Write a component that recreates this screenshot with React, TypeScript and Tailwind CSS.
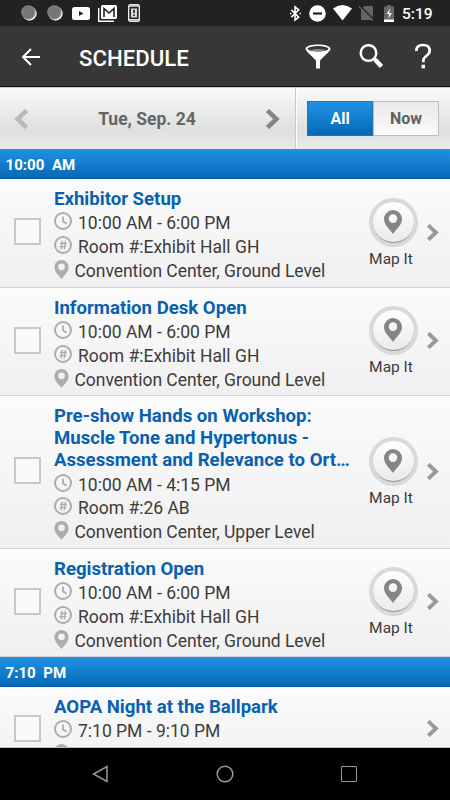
import React from 'react';

type Session = { title: string[]; time: string; room?: string; place?: string; height: string };

const morning: Session[] = [
  { title: ['Exhibitor Setup'], time: '10:00 AM - 6:00 PM', room: 'Room #:Exhibit Hall GH', place: 'Convention Center, Ground Level', height: 'h-[109px]' },
  { title: ['Information Desk Open'], time: '10:00 AM - 6:00 PM', room: 'Room #:Exhibit Hall GH', place: 'Convention Center, Ground Level', height: 'h-[108px]' },
  {
    title: ['Pre-show Hands on Workshop:', 'Muscle Tone and Hypertonus -', 'Assessment and Relevance to Ort…'],
    time: '10:00 AM - 4:15 PM', room: 'Room #:26 AB', place: 'Convention Center, Upper Level', height: 'h-[153px]',
  },
  { title: ['Registration Open'], time: '10:00 AM - 6:00 PM', room: 'Room #:Exhibit Hall GH', place: 'Convention Center, Ground Level', height: 'h-[108px]' },
];

function Pin({ className }: { className: string }) {
  return (
    <svg className={className} viewBox="0 0 18 24" fill="currentColor">
      <path fillRule="evenodd" d="M9 0a9 9 0 0 0-9 9c0 6 6 10.500 9 15 3-4.500 9-9 9-15a9 9 0 0 0-9-9Zm0 4.300a4.300 4.300 0 1 1 0 8.600 4.300 4.300 0 0 1 0-8.600Z" />
    </svg>
  );
}

function Clock() {
  return (
    <svg className="size-[18px] shrink-0" viewBox="0 0 18 18" fill="none" stroke="#adadad" strokeWidth="2">
      <circle cx="9" cy="9" r="8" />
      <path d="M9 4.500V9.500L12.700 11.600" strokeWidth="1.800" />
    </svg>
  );
}

function Hash() {
  return (
    <svg className="size-[18px] shrink-0" viewBox="0 0 18 18" fill="none" stroke="#adadad" strokeWidth="2">
      <circle cx="9" cy="9" r="8" />
      <path d="M8.300 4.700 7 13.300M11.500 4.700 10.200 13.300M6 7.500h6.800M5.500 10.700h6.800" strokeWidth="1.300" />
    </svg>
  );
}

function Chevron({ className, left }: { className: string; left?: boolean }) {
  return (
    <svg className={className} viewBox="0 0 14 20" fill="none" stroke="currentColor" strokeWidth="4.500">
      <path d={left ? 'M12.500 1.500 3.500 10l9 8.500' : 'M1.500 1.500l9 8.500-9 8.500'} />
    </svg>
  );
}

function TimeHeader({ children }: { children: React.ReactNode }) {
  return (
    <div className="h-[30px] shrink-0 border-b border-[#0759a4] bg-linear-to-b from-[#2192e5] to-[#0469b5] pl-[5.500px] text-[15.100px] leading-[32px] font-bold whitespace-pre text-white">
      {children}
    </div>
  );
}

function Row({ s }: { s: Session }) {
  return (
    <div className={`flex shrink-0 border-b border-[#d3d4d6] bg-linear-to-b from-[#fbfbfb] to-[#f0f0f2] ${s.height}`}>
      <div className="flex w-[54px] shrink-0 items-center pb-[3px] pl-[14px]">
        <div className="size-[27px] border-2 border-[#c8c8c8] bg-[#fafafa]" />
      </div>
      <div className="w-[315px] shrink-0 pt-[9px] whitespace-nowrap text-[#3f3b38]">
        <div className="text-[18.600px] leading-[22.200px] font-bold text-[#0861b0]">
          {s.title.map((t) => <div key={t}>{t}</div>)}
        </div>
        <div className="mt-[2px] text-[17.500px] leading-[23.700px]">
          <div className="flex h-[23.700px] items-start gap-[6px]"><Clock /><span>{s.time}</span></div>
          {s.room && <div className="flex h-[23.700px] items-start gap-[6px]"><Hash /><span>{s.room}</span></div>}
          {s.place && <div className="flex h-[23.700px] items-start gap-[5.500px]"><Pin className="h-[19px] w-[15px] shrink-0 text-[#adadad]" /><span className="tracking-[-0.040px]">{s.place}</span></div>}
        </div>
      </div>
      <div className="flex w-[49px] shrink-0 flex-col items-center justify-center">
        <div className="flex size-[49px] items-center justify-center rounded-full bg-[#d9d9d9]">
          <div className="flex size-[41px] items-center justify-center rounded-full border-b border-[#999] bg-linear-to-b from-white to-[#eaeaea]">
            <Pin className="mr-px h-[24px] w-[18px] text-[#858585]" />
          </div>
        </div>
        <div className="mt-[2px] mr-[5px] h-[20px] text-[15.500px] leading-[20px] whitespace-nowrap text-[#3f3b38]">Map It</div>
      </div>
      <div className="flex flex-1 items-center pb-[2px] pl-[9px]">
        <Chevron className="h-[17px] w-[12px] text-[#999]" />
      </div>
    </div>
  );
}

function StatusBar() {
  return (
    <div className="flex h-[26px] shrink-0 items-center bg-[#222] pr-[17px] pl-[21px] text-white">
      {[0, 1].map((i) => (
        <svg key={i} className="mr-[10px] size-[16px]" viewBox="0 0 16 16">
          <circle cx="8.500" cy="8.500" r="7.200" fill="#eee" />
          <circle cx="7.300" cy="7.300" r="7.100" fill="#777" />
          <circle cx="7.300" cy="7.300" r="6.200" fill="none" stroke="#999" strokeDasharray="1 1.300" />
        </svg>
      ))}
      <svg className="-ml-px h-[13px] w-[18px]" viewBox="0 0 18 13"><rect width="18" height="13" rx="2.500" fill="#fff" /><path d="M7 4v5l4.500-2.500z" fill="#222" /></svg>
      <svg className="ml-[8px] h-[17px] w-[19px]" viewBox="0 0 19 17">
        <path d="M.7 3v13.200H16" fill="none" stroke="#fff" strokeWidth="1.400" />
        <rect x="3" width="16" height="14" rx="1.500" fill="#fff" />
        <path d="M6 12V3.500l5 4.500 5-4.500V12" fill="none" stroke="#222" strokeWidth="1.600" />
      </svg>
      <svg className="ml-[11px] h-[18px] w-[12px]" viewBox="0 0 12 18">
        <rect x=".7" y=".7" width="10.600" height="16.600" rx="1.500" fill="#222" stroke="#e8e8e8" strokeWidth="1.400" />
        <path d="M1 2h10M1 15.800h10" stroke="#ddd" strokeWidth="1.500" />
        <rect x="3" y="4.500" width="6" height="9" fill="#ddd" />
        <path d="M6 5.800v3.500M6 10.500v1.600" stroke="#222" strokeWidth="1.600" />
      </svg>
      <div className="flex-1" />
      <svg className="mr-px h-[17px] w-[11px]" viewBox="0 0 12 17" fill="none" stroke="#fff" strokeWidth="1.700"><path d="m1.500 4.500 8 8-4 3.300V1.200l4 3.300-8 8M0 8.500h1.500M10.500 8.500H12" /></svg>
      <svg className="ml-[7px] size-[17px]" viewBox="0 0 17 17"><circle cx="8.500" cy="8.500" r="8.300" fill="#fff" /><path d="M4 8.500h9" stroke="#222" strokeWidth="2.200" /></svg>
      <svg className="ml-[7px] h-[16px] w-[19px]" viewBox="0 0 19 16"><path d="M0 3.500Q9.500-3.500 19 3.500L9.500 15.500z" fill="#fff" /></svg>
      <svg className="ml-[7px] h-[16px] w-[15px]" viewBox="0 0 15 16"><path d="M5 1h8q1 0 1 1v13H2V5z" fill="#646464" /><path d="m1 1 14 14" stroke="#222" strokeWidth="1.800" /><path d="m0 1.500 14 14" stroke="#646464" strokeWidth="1.200" /></svg>
      <svg className="ml-[10px] h-[17px] w-[10px]" viewBox="0 0 10 17"><path d="M3 0h4v1.500h3V17H0V1.500h3z" fill="#686868" /><path d="M0 14.500h10V17H0z" fill="#fff" /><path d="M6 3.500 2.500 9H5l-.7 4.500L7.800 8H5.200z" fill="#fff" /></svg>
      <span className="ml-[8px] w-[31px] pt-px text-[15.500px] leading-[26px] font-medium">5:19</span>
    </div>
  );
}

export default function App() {
  return (
    <div className="flex h-[800px] w-[450px] flex-col overflow-hidden bg-black font-[Roboto,sans-serif]">
      <StatusBar />
      <header className="flex h-[61px] shrink-0 items-center border-b border-[#111] bg-[#373737] text-white">
        <svg className="mt-[2px] ml-[21px] h-[18px] w-[19px]" viewBox="0 0 19 18" fill="none" stroke="currentColor" strokeWidth="2"><path d="M10 1 2 9l8 8M2 9h17" /></svg>
        <h1 className="ml-[39px] flex-1 pt-[3px] text-[22.200px] leading-[30px] font-medium">SCHEDULE</h1>
        <svg className="mt-px h-[25px] w-[26px]" viewBox="0 0 26 26" preserveAspectRatio="none"><path d="M.5 5C.5-1 25.500-1 25.500 5c0 3-8.500 9-10.500 12.500v8h-4v-8C9 14 .5 8 .5 5Z" fill="#fff" /><ellipse cx="13" cy="5" rx="10.500" ry="2.800" fill="#373737" /><path d="M4.500 6.200q8.500-2 17 0-8.500 3-17 0Z" fill="#888" /></svg>
        <svg className="mt-px ml-[28px] h-[25px] w-[25px]" viewBox="0 0 25 25" fill="none" stroke="#fff"><circle cx="9.500" cy="9" r="7.800" strokeWidth="2.500" /><path d="m14.500 14 3 3" strokeWidth="3" /><path d="m16 15.500 6.500 7" strokeWidth="4.500" /></svg>
        <svg className="mr-[18px] ml-[30px] h-[26px] w-[18px]" viewBox="0 0 18 26" fill="none" stroke="#fff" strokeWidth="2.700"><path d="M2.300 8C2.300 4 5 2 9 2c4.200 0 6.700 2 6.700 5.800 0 5-6.400 5-6.400 10v1.500" /><path d="M9.300 21.700v3.600" strokeWidth="3.500" /></svg>
      </header>
      <div className="flex h-[62px] shrink-0 border-t border-[#ccc] bg-linear-to-b from-[#fafafa] via-[#dedfdf] via-70% to-[#ebebed]">
        <div className="flex w-[296px] items-center justify-between border-r border-[#c9c9c9] pr-[15px] pl-[14px]">
          <Chevron left className="h-[20px] w-[14px] text-[#b9b9b9]" />
          <span className="pt-px text-[17.500px] font-bold text-[#666]">Tue, Sep. 24</span>
          <Chevron className="h-[20px] w-[14px] text-[#858585]" />
        </div>
        <div className="flex flex-1 items-center border-l border-white pl-[10px]">
          <div className="flex h-[35px] w-[132px] text-center text-[16px] leading-[34px] font-bold">
            <div className="w-[66px] border border-[#2475b8] bg-linear-to-b from-[#2192e5] to-[#0469b5] text-white">All</div>
            <div className="w-[66px] border border-[#bdbdbd] bg-linear-to-b from-[#e9e9e9] to-[#fafafa] text-[#626259]">Now</div>
          </div>
        </div>
      </div>
      <TimeHeader>{'10:00  AM'}</TimeHeader>
      {morning.map((s, i) => <Row key={i} s={s} />)}
      <TimeHeader>{'7:10  PM'}</TimeHeader>
      <div className="flex h-[61px] shrink-0 overflow-hidden border-b border-[#bbb] bg-linear-to-b from-[#fbfbfb] to-[#f3f3f3]">
        <div className="w-[54px] shrink-0 pt-[28px] pl-[14px]"><div className="size-[27px] border-2 border-[#c8c8c8] bg-[#fafafa]" /></div>
        <div className="flex-1 pt-[9px] whitespace-nowrap text-[#3f3b38]">
          <div className="text-[18.600px] leading-[22px] font-bold text-[#0861b0]">AOPA Night at the Ballpark</div>
          <div className="mt-[2px] flex h-[23.700px] gap-[6px] text-[17.500px] leading-[23.700px]"><Clock /><span>7:10 PM - 9:10 PM</span></div>
          <Pin className="h-[19px] w-[15px] text-[#adadad]" />
        </div>
        <Chevron className="mt-[33px] mr-[11px] h-[17px] w-[12px] text-[#999]" />
      </div>
      <nav className="flex h-[52px] shrink-0 items-center bg-black text-[#999]">
        <svg className="ml-[92px] h-[18px] w-[16px]" viewBox="0 0 16 18" fill="none" stroke="currentColor" strokeWidth="1.500"><path d="M15 1.500v15L1.500 9z" /></svg>
        <svg className="ml-[108px] size-[18px]" viewBox="0 0 18 18" fill="none" stroke="currentColor" strokeWidth="1.500"><circle cx="9" cy="9" r="7.800" /></svg>
        <div className="ml-[107px] size-[16px] rounded-[1px] border-[1.500px] border-current" />
      </nav>
    </div>
  );
}
